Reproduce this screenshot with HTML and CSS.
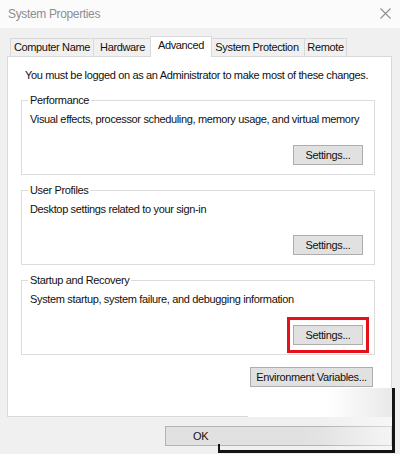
FILE: index.html
```html
<!DOCTYPE html>
<html lang="en">
<head>
    <meta charset="UTF-8">
    <meta name="viewport" content="width=device-width, initial-scale=1.0">
    <title>System Properties</title>
    <link rel="stylesheet" href="styles.css">
</head>

<body>
    <div id="window">
        <div class="title-bar">
            <span class="title">System Properties</span>
            <svg class="close" width="11" height="11" viewBox="0 0 11 11">
                <path d="M0.5 0.5 L10.5 10.5 M10.5 0.5 L0.5 10.5" stroke="#8f8f8f" stroke-width="1.1" fill="none" />
            </svg>
        </div>

        <div class="dialog">
            <div class="tabs">
                <div class="tab tab-cn">Computer Name</div>
                <div class="tab tab-hw">Hardware</div>
                <div class="tab tab-adv active">Advanced</div>
                <div class="tab tab-sp">System Protection</div>
                <div class="tab tab-rm">Remote</div>
            </div>

            <div class="panel">
                <p class="intro">You must be logged on as an Administrator to make most of these changes.</p>

                <fieldset class="group">
                    <legend>Performance</legend>
                    <p class="desc">Visual effects, processor scheduling, memory usage, and virtual memory</p>
                    <div class="actions">
                        <button class="btn btn-settings">Settings...</button>
                    </div>
                </fieldset>

                <fieldset class="group">
                    <legend>User Profiles</legend>
                    <p class="desc">Desktop settings related to your sign-in</p>
                    <div class="actions">
                        <button class="btn btn-settings">Settings...</button>
                    </div>
                </fieldset>

                <fieldset class="group">
                    <legend>Startup and Recovery</legend>
                    <p class="desc">System startup, system failure, and debugging information</p>
                    <div class="actions">
                        <span class="highlight">
                            <button class="btn btn-settings">Settings...</button>
                        </span>
                    </div>
                </fieldset>

                <div class="env-row">
                    <button class="btn btn-env">Environment Variables...</button>
                </div>
            </div>

            <div class="footer">
                <button class="btn btn-ok">OK</button>
            </div>
        </div>

        <!-- torn edge of the pasted screenshot -->
        <div class="shot-edge"></div>
    </div>
</body>
</html>
```

FILE: styles.css
```css
html, body {
    width: 400px;
    height: 454px;
    margin: 0;
    overflow: hidden;
}

body {
    background-color: #f0f0f0;
    color: #111111;
    font-family: "Liberation Sans", Arial, sans-serif;
    font-size: 11px;
    letter-spacing: -0.35px;
}

#window {
    position: relative;
    height: 100%;
}

.title-bar {
    display: flex;
    justify-content: space-between;
    align-items: flex-start;
    height: 28px;
    padding: 7px 9px 0 8px;
    box-sizing: border-box;
    background-color: #fbfbfb;
}
.title-bar > .title {
    color: #8e8e8e;
    font-size: 12px;
    line-height: 15px;
}
.title-bar > .close {
    margin-top: 1px;
}

.dialog {
    padding-top: 8px;
}

.tabs {
    display: flex;
    align-items: flex-end;
    height: 20px;
    padding-left: 10px;
}
.tabs > .tab {
    position: relative;
    height: 18px;
    box-sizing: border-box;
    border: 1px solid #d9d9d9;
    border-bottom: none;
    margin-left: -1px;
    background-color: #f0f0f0;
    line-height: 17px;
    text-align: center;
    white-space: nowrap;
}
.tabs > .tab-cn { width: 84px; margin-left: 0; }
.tabs > .tab-hw { width: 59px; }
.tabs > .tab-adv { width: 62px; }
.tabs > .tab-sp { width: 96px; }
.tabs > .tab-rm { width: 43px; }
.tabs > .tab.active {
    z-index: 1;
    height: 21px;
    margin: 0 -2px -1px -2px;
    padding-bottom: 3px;
    background-color: #ffffff;
    line-height: 17px;
}

.panel {
    margin: 0 8px 0 7px;
    padding: 11px 16px 29px 13px;
    border: 1px solid #d9d9d9;
    background-color: #ffffff;
}

.intro {
    margin: 0;
    padding-left: 4px;
    line-height: 15px;
    white-space: nowrap;
}

.group {
    margin: 8px 0 0 0;
    padding: 0 11px 9px 8px;
    border: 1px solid #dcdcdc;
}
.intro + .group {
    margin-top: 10px;
}
.group > legend {
    margin-left: -2px;
    padding: 0 2px;
    line-height: 15px;
}
.group > .desc {
    margin: 4px 0 0 0;
    line-height: 15px;
    white-space: nowrap;
}
.group > .actions {
    display: flex;
    justify-content: flex-end;
    margin-top: 18px;
}

.btn {
    height: 20px;
    padding: 0;
    border: 1px solid #adadad;
    background-color: #e1e1e1;
    color: #111111;
    font-family: inherit;
    font-size: 11px;
    letter-spacing: -0.35px;
    line-height: 18px;
}
.btn-settings {
    display: block;
    width: 70px;
}

.highlight {
    display: block;
    margin: -8px -6px;
    padding: 5px 3px;
    border: 3px solid #e5101c;
}

.env-row {
    display: flex;
    justify-content: flex-end;
    margin-top: 12px;
    padding-right: 2px;
}
.btn-env {
    width: 123px;
}

.footer {
    display: flex;
    margin-top: 9px;
    padding-left: 165px;
}
.btn-ok {
    width: 227px;
    padding-left: 27px;
    border-color: #b5b5b5;
    background: linear-gradient(to right, #e1e1e1 60%, #ebebeb);
    text-align: left;
}

.shot-edge {
    position: absolute;
    left: 248px;
    top: 388px;
    width: 144px;
    height: 62px;
    border-right: 3px solid #141414;
    background:
        linear-gradient(to right, #ffffff 55%, #e9e9e9) top / 100% 29px no-repeat,
        linear-gradient(to right, rgba(255, 255, 255, 0) 50%, rgba(255, 255, 255, 0.45));
}
.shot-edge::after {
    content: "";
    position: absolute;
    left: -30px;
    right: -3px;
    bottom: -3px;
    height: 3px;
    background-color: #141414;
}
.shot-edge::before {
    content: "";
    position: absolute;
    left: -30px;
    bottom: -3px;
    width: 2px;
    height: 9px;
    background-color: #141414;
}
```
